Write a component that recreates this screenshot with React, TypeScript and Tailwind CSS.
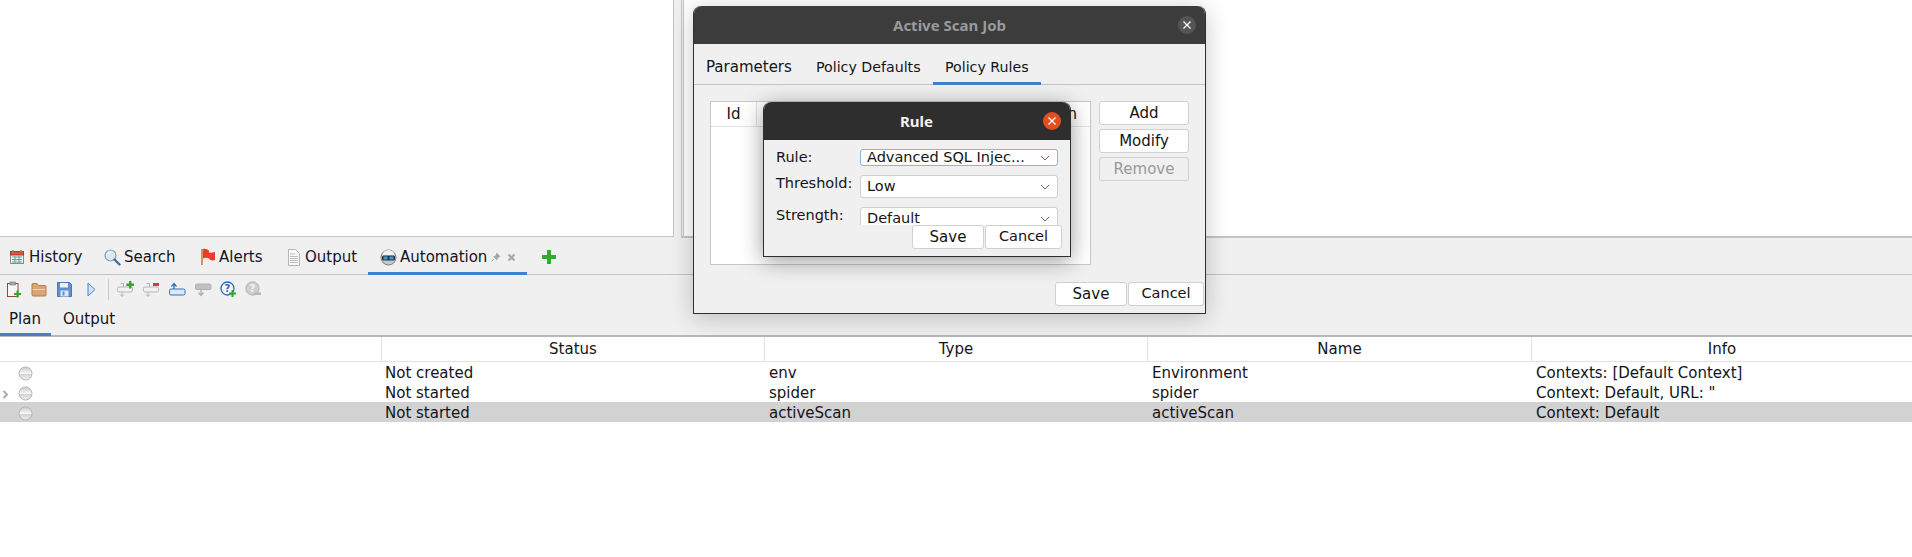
import React from "react";

const Btn = ({ w, children, disabled }: { w: string; children: React.ReactNode; disabled?: boolean }) => (
  <div className={`${w} h-[24px] flex items-center justify-center rounded-[3px] border border-[#d0d0d0] ${disabled ? "bg-[#f0f0f0] text-[#9a9a9a]" : "bg-white text-[#141414]"}`}>
    {children}
  </div>
);

const Chevron = () => (
  <svg width="12" height="8" viewBox="0 0 12 8" className="shrink-0">
    <path d="M2 2l4 4 4-4" fill="none" stroke="#666" strokeWidth="1" />
  </svg>
);

const Combo = ({ text, h, focus }: { text: string; h: string; focus?: boolean }) => (
  <div className={`w-[198px] ${h} shrink-0 bg-white flex justify-between items-center pl-[6px] pr-[6px] border ${focus ? "border-[#8cb4e0]" : "border-[#d0d0d0]"} rounded-[3px] text-[#141414]`}>
    <span className="leading-[15px]">{text}</span>
    <Chevron />
  </div>
);

const Close = ({ cls }: { cls: string }) => (
  <div className={`w-[18px] h-[18px] rounded-full flex items-center justify-center ${cls}`}>
    <svg width="10" height="10" viewBox="0 0 10 10">
      <path d="M1.5 1.5l7 7M8.5 1.5l-7 7" stroke="#fff" strokeWidth="1.3" fill="none" />
    </svg>
  </div>
);

const CalendarIcon = () => (
  <svg width="16" height="16" viewBox="0 0 16 16">
    <rect x="1.5" y="2.5" width="13" height="12" fill="#f5f5f5" stroke="#8a8a8a" />
    <rect x="1.5" y="2.5" width="13" height="3.5" fill="#e0503c" stroke="#b8392b" />
    <path d="M4 1v3M12 1v3" stroke="#888" strokeWidth="1.4" />
    <path d="M3 8h10M3 10.5h10M3 13h10M6 7v7M10 7v7" stroke="#5aa89a" strokeWidth="1" />
  </svg>
);
const SearchIcon = () => (
  <svg width="17" height="17" viewBox="0 0 17 17">
    <circle cx="6.5" cy="6.5" r="5.5" fill="#dbe9f5" stroke="#8f9aa5" strokeWidth="1.2" />
    <path d="M4 5a3 3 0 013-2" stroke="#fff" strokeWidth="1.2" fill="none" />
    <path d="M10.5 10.5l5 5" stroke="#3f6fa8" strokeWidth="2.4" strokeLinecap="round" />
  </svg>
);
const FlagIcon = () => (
  <svg width="16" height="18" viewBox="0 0 16 18">
    <path d="M2 1v16" stroke="#c98a4a" strokeWidth="1.8" />
    <path d="M3 1c3-.5 4 .5 6 1.500v2c2 .5 3 0 6-.5v8c-2 1-5 .5-6-1.500 -2-1-4-1-6 0z" fill="#ee3b2a" />
  </svg>
);
const DocIcon = () => (
  <svg width="14" height="17" viewBox="0 0 14 17">
    <path d="M1.5 .5h7l4 4v12h-11z" fill="#f8f8f8" stroke="#b5b5b5" />
    <path d="M3 5h5M3 7.5h8M3 9.5h8M3 11.5h8M3 13.5h8" stroke="#bdbdbd" />
  </svg>
);
const RobotIcon = () => (
  <svg width="17" height="17" viewBox="0 0 17 17">
    <circle cx="8.5" cy="8.5" r="7.5" fill="#c9c9c9" stroke="#7d7d7d" />
    <path d="M2.500 6.500a6 5.500 0 0112 0z" fill="#f2f2f2" />
    <rect x="2" y="6.500" width="13" height="5" rx="1.500" fill="#333" />
    <rect x="3.500" y="7.500" width="4" height="3" fill="#2a9fe8" />
    <rect x="9.500" y="7.500" width="4" height="3" fill="#2a9fe8" />
  </svg>
);
const PinIcon = () => (
  <svg width="10" height="10" viewBox="0 0 10 10">
    <path d="M5.5 .5l4 4-1.5.5-1.5 2-.5 1.5-4-4L4 4l1-1.5z" fill="#a5a5a5" />
    <path d="M3 7L.5 9.5" stroke="#a5a5a5" />
  </svg>
);
const XSmall = () => (
  <svg width="9" height="9" viewBox="0 0 9 9">
    <path d="M1.5 1.5l6 6M7.5 1.5l-6 6" stroke="#a8a8a8" strokeWidth="2.2" />
  </svg>
);
const PlusIcon = () => (
  <svg width="14" height="14" viewBox="0 0 14 14">
    <path d="M5 0h4v5h5v4H9v5H5V9H0V5h5z" fill="#30ac2e" />
  </svg>
);
const Badge = ({ c, minus }: { c: string; minus?: boolean }) =>
  minus ? (
    <rect x="10" y="2" width="6" height="3" fill={c} />
  ) : (
    <path d="M12 0h2.4v2.6H17V5h-2.6v2.6H12V5H9.4V2.6H12z" fill={c} />
  );
const NewPlan = () => (
  <svg width="16" height="17" viewBox="0 0 16 17">
    <rect x="1.5" y="2.5" width="10.5" height="13" fill="#f6f6f6" stroke="#8e4a32" />
    <rect x="4" y="1" width="5.5" height="3" fill="#a9a9a9" stroke="#777" strokeWidth=".6" />
    <path d="M10.5 9.5h2v2.5H15v2h-2.5v2.5h-2V14H8v-2h2.5z" fill="#33a532" />
  </svg>
);
const Folder = () => (
  <svg width="16" height="15" viewBox="0 0 16 15">
    <path d="M1 2.5a1 1 0 011-1h4l1.5 2H14a1 1 0 011 1V13a1 1 0 01-1 1H2a1 1 0 01-1-1z" fill="#d9a675" stroke="#b07c4e" />
    <path d="M1.5 7.5h13" stroke="#f0d0ad" />
  </svg>
);
const Floppy = () => (
  <svg width="15" height="15" viewBox="0 0 15 15">
    <path d="M.5.5h12l2 2v12H.5z" fill="#5e90cf" stroke="#4a79b5" />
    <rect x="3" y="1" width="8" height="4.5" fill="#eef3f9" />
    <rect x="3.5" y="8.5" width="8" height="6" fill="#e4e8ee" />
    <rect x="5.5" y="9.5" width="2" height="4" fill="#5e90cf" />
  </svg>
);
const Play = () => (
  <svg width="9" height="15" viewBox="0 0 9 15">
    <path d="M1 1l7 6.5L1 14z" fill="#cfe2f7" stroke="#4a86cc" />
  </svg>
);
const Job = ({ fill, stroke, badge }: { fill: string; stroke: string; badge?: React.ReactNode }) => (
  <svg width="17" height="17" viewBox="0 0 17 17">
    <rect x=".5" y="6" width="15" height="5" rx="1.5" fill={fill} stroke={stroke} />
    <path d="M3.5 2.5h3v3.5M5 11v4M3 13.5l2 2 2-2" fill="none" stroke={stroke} />
    {badge}
  </svg>
);
const MoveUp = () => (
  <svg width="17" height="15" viewBox="0 0 17 15">
    <rect x=".5" y="7" width="15.5" height="6" rx="1.5" fill="#dbe8f7" stroke="#2f6fbd" />
    <path d="M5 7V2M2.5 4.5L5 1.500l2.500 3" fill="none" stroke="#2f6fbd" strokeWidth="1.3" />
  </svg>
);
const MoveDown = () => (
  <svg width="17" height="15" viewBox="0 0 17 15">
    <rect x=".5" y="2" width="15.5" height="5.500" rx="1.500" fill="#c0c0c0" stroke="#b0b0b0" />
    <path d="M6 7v6M3.500 10.500L6 13.500l2.500-3" fill="none" stroke="#b0b0b0" strokeWidth="1.3" />
  </svg>
);
const HelpAdd = () => (
  <svg width="17" height="17" viewBox="0 0 17 17">
    <circle cx="7.500" cy="7.500" r="6.500" fill="#f4f7fb" stroke="#2f66b5" strokeWidth="1.300" />
    <text x="7.500" y="11" textAnchor="middle" fontSize="10" fontWeight="700" fill="#2f66b5" fontFamily="'DejaVu Sans',sans-serif">?</text>
    <path d="M11.500 9h2v2.500H16v2h-2.500V16h-2v-2.500H9v-2h2.500z" fill="#33a532" />
  </svg>
);
const HelpRemove = () => (
  <svg width="17" height="17" viewBox="0 0 17 17">
    <circle cx="7.500" cy="7.500" r="6.500" fill="#cfcfcf" stroke="#bcbcbc" strokeWidth="1.300" />
    <text x="7.500" y="11" textAnchor="middle" fontSize="10" fontWeight="700" fill="#f3f3f3" fontFamily="'DejaVu Sans',sans-serif">?</text>
    <rect x="9" y="11.500" width="7" height="2.500" fill="#b8b8b8" />
  </svg>
);
const Ball = () => (
  <svg width="15" height="15" viewBox="0 0 15 15" className="shrink-0">
    <defs>
      <linearGradient id="ballTop" x1="0" y1="0" x2="0" y2="1">
        <stop offset="0" stopColor="#c9c9c9" />
        <stop offset=".5" stopColor="#f7f7f7" />
        <stop offset=".52" stopColor="#cfcfcf" />
        <stop offset="1" stopColor="#f2f2f2" />
      </linearGradient>
    </defs>
    <circle cx="7.500" cy="7.500" r="6.500" fill="url(#ballTop)" stroke="#b5b5b5" />
  </svg>
);

const Tab = ({ icon, label, cls }: { icon: React.ReactNode; label: string; cls: string }) => (
  <div className={`flex items-center ${cls}`}>
    {icon}
    <span>{label}</span>
  </div>
);

const rows = [
  { s: "Not created", t: "env", n: "Environment", i: "Contexts: [Default Context]", sel: false, arrow: false },
  { s: "Not started", t: "spider", n: "spider", i: 'Context: Default, URL: "', sel: false, arrow: true },
  { s: "Not started", t: "activeScan", n: "activeScan", i: "Context: Default", sel: true, arrow: false },
];

export default function App() {
  return (
    <div className="relative w-[1912px] h-[557px] overflow-hidden bg-white text-[15px] text-[#141420] font-['DejaVu_Sans',sans-serif]">
      {/* top split panes */}
      <div className="flex h-[238px] bg-[#f0f0f0]">
        <div className="w-[674px] h-[237px] bg-white border-r border-b border-[#c4c4c4]" />
        <div className="ml-[7px] flex-1 h-[238px] border-l border-b-2 border-[#c4c4c4] pl-[1px]">
          <div className="h-full bg-white border-l border-[#c4c4c4]" />
        </div>
      </div>

      {/* workspace tabs */}
      <div className="relative h-[37px] bg-[#f0f0f0] border-b border-[#c4c4c4] flex items-center pl-[9px] pt-[2px]">
        <Tab cls="gap-[4px] w-[95px]" icon={<CalendarIcon />} label="History" />
        <Tab cls="gap-[3px] w-[96px]" icon={<SearchIcon />} label="Search" />
        <Tab cls="gap-[3px] w-[87px]" icon={<FlagIcon />} label="Alerts" />
        <Tab cls="gap-[4px] w-[93px]" icon={<DocIcon />} label="Output" />
        <Tab cls="gap-[3px] w-[111px]" icon={<RobotIcon />} label="Automation" />
        <div className="w-[16px]"><PinIcon /></div>
        <div className="w-[35px]"><XSmall /></div>
        <PlusIcon />
        <div className="absolute left-[368px] bottom-[-1px] w-[159px] h-[3px] bg-[#3f82cc]" />
      </div>

      {/* toolbar */}
      <div className="h-[31px] bg-[#f0f0f0] flex items-center pl-[6px] pb-[3px]">
        <NewPlan />
        <div className="ml-[9px]"><Folder /></div>
        <div className="ml-[10px]"><Floppy /></div>
        <div className="ml-[15px]"><Play /></div>
        <div className="ml-[12px] w-px h-[21px] bg-[#c8c8c8]" />
        <div className="ml-[8px]"><Job fill="#f2f2f2" stroke="#b5b5b5" badge={<Badge c="#33a532" />} /></div>
        <div className="ml-[9px]"><Job fill="#f2f2f2" stroke="#b5b5b5" badge={<Badge c="#d43c3c" minus />} /></div>
        <div className="ml-[9px]"><MoveUp /></div>
        <div className="ml-[9px]"><MoveDown /></div>
        <div className="ml-[8px]"><HelpAdd /></div>
        <div className="ml-[8px]"><HelpRemove /></div>
      </div>

      {/* plan tabs */}
      <div className="relative h-[31px] bg-[#f0f0f0] border-b-2 border-[#b8b8b8] flex items-center pl-[9px] pb-[2px]">
        <span className="w-[54px]">Plan</span>
        <span>Output</span>
        <div className="absolute left-0 bottom-[-1px] w-[51px] h-[3px] bg-[#3f82cc]" />
      </div>

      {/* table */}
      <div className="grid grid-cols-[382px_383px_383px_384px_1fr] h-[25px] border-b border-[#e2e2e2]">
        <div className="border-r border-[#e2e2e2]" />
        {["Status", "Type", "Name", "Info"].map((h, i) => (
          <div key={h} className={`flex items-center justify-center ${i < 3 ? "border-r border-[#e2e2e2]" : ""}`}>{h}</div>
        ))}
      </div>
      {rows.map((r, i) => (
        <div key={i} className={`grid grid-cols-[382px_383px_383px_384px_1fr] h-[20px] items-center pb-[1px] ${r.sel ? "bg-[#d2d2d2]" : ""}`}>
          <div className="relative pl-[18px] flex items-center">
            {r.arrow && (
              <svg width="7" height="9" viewBox="0 0 7 9" className="absolute left-[2px] top-[4px]">
                <path d="M1.500 1l3.500 3.500L1.500 8" fill="none" stroke="#a8a8a8" strokeWidth="1.800" />
              </svg>
            )}
            <Ball />
          </div>
          <div className="pl-[3px]">{r.s}</div>
          <div className="pl-[4px]">{r.t}</div>
          <div className="pl-[4px]">{r.n}</div>
          <div className="pl-[4px]">{r.i}</div>
        </div>
      ))}

      {/* Active Scan Job window */}
      <div className="absolute left-[693px] top-[6px] w-[513px] h-[308px] bg-[#f0f0f0] rounded-t-[8px] border border-t-0 border-[#2e2e2e] shadow-[0_4px_24px_rgba(0,0,0,0.22)] flex flex-col">
        <div className="relative h-[38px] bg-[#3c3c3c] rounded-t-[8px] flex items-center justify-center font-['Noto_Sans',sans-serif] font-bold text-[15px] text-[#9a9a9a]">
          Active Scan Job
          <Close cls="absolute right-[9px] top-[10px] bg-[#555555]" />
        </div>
        <div className="relative h-[41px] border-b border-[#c4c4c4] flex items-center pl-[12px] pt-[7px]">
          <span className="w-[110px]">Parameters</span>
          <span className="w-[129px] text-[14.2px]">Policy Defaults</span>
          <span className="text-[14.2px]">Policy Rules</span>
          <div className="absolute left-[239px] bottom-[-1px] w-[108px] h-[3px] bg-[#3f82cc]" />
        </div>
        <div className="flex pl-[16px] pt-[16px]">
          <div className="w-[381px] h-[164px] bg-white border border-[#c8c8c8]">
            <div className="flex h-[25px] border-b border-[#e2e2e2]">
              <div className="w-[46px] border-r border-[#e2e2e2] flex items-center justify-center">Id</div>
              <div className="flex-1 flex items-center justify-end pr-[13px]">n</div>
            </div>
          </div>
          <div className="ml-[8px] flex flex-col gap-[4px]">
            <Btn w="w-[90px]">Add</Btn>
            <Btn w="w-[90px]">Modify</Btn>
            <Btn w="w-[90px]" disabled>Remove</Btn>
          </div>
        </div>
        <div className="flex justify-end gap-[1px] pr-[1px] pt-[17px]">
          <Btn w="w-[72px]">Save</Btn>
          <Btn w="w-[76px]"><span className="text-[14.5px]">Cancel</span></Btn>
        </div>
      </div>

      {/* Rule window */}
      <div className="absolute left-[763px] top-[102px] w-[308px] h-[155px] bg-[#f0f0f0] rounded-t-[8px] border border-t-0 border-[#2e2e2e] shadow-[0_4px_22px_rgba(0,0,0,0.4)] flex flex-col">
        <div className="relative h-[38px] bg-[#2e2e2e] rounded-t-[8px] flex items-center justify-center pr-[1px] font-['Noto_Sans',sans-serif] font-bold text-[15px] text-[#f2f2f2]">
          Rule
          <Close cls="absolute right-[9px] top-[10px] bg-[#e2501f]" />
        </div>
        <div className="grid grid-cols-[84px_198px] grid-rows-[17px_23px_18px] gap-y-[9px] items-start pl-[12px] pt-[9px] text-[14.5px]">
          <div className="h-[17px] flex items-center">Rule:</div>
          <Combo text="Advanced SQL Injec..." h="h-[17px]" focus />
          <div className="h-[17px] flex items-center">Threshold:</div>
          <Combo text="Low" h="h-[23px]" />
          <div className="h-[17px] flex items-center">Strength:</div>
          <div className="h-[18px] overflow-hidden"><Combo text="Default" h="h-[23px]" /></div>
        </div>
        <div className="flex justify-end gap-[1px] pr-[8px]">
          <Btn w="w-[72px]">Save</Btn>
          <Btn w="w-[77px]"><span className="text-[14.5px]">Cancel</span></Btn>
        </div>
      </div>
    </div>
  );
}
